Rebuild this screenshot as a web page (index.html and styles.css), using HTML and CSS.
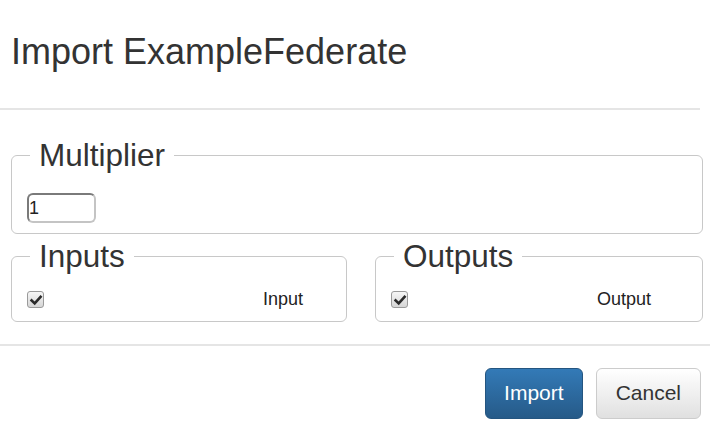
FILE: index.html
```html
<!DOCTYPE html>
<html>
<head>
<meta charset="utf-8">
<link rel="stylesheet" href="styles.css">
</head>
<body>
<div class="modal">
  <div class="modal-header">
    <h3 class="modal-title">Import ExampleFederate</h3>
  </div>
  <div class="modal-body">
    <fieldset class="group">
      <legend class="group-legend">Multiplier</legend>
      <input class="mult-input" type="text" value="1">
    </fieldset>
    <div class="io-row">
      <fieldset class="group">
        <legend class="group-legend">Inputs</legend>
        <div class="port-row">
          <span class="check"><svg viewBox="0 0 16 16" width="16" height="16"><path d="M3.6 8.4 L6.7 11.4 L12.6 4.8" fill="none" stroke="#2b2b2b" stroke-width="2.6" stroke-linecap="square"/></svg></span>
          <span class="port-name port-name-in">Input</span>
        </div>
      </fieldset>
      <fieldset class="group">
        <legend class="group-legend">Outputs</legend>
        <div class="port-row">
          <span class="check"><svg viewBox="0 0 16 16" width="16" height="16"><path d="M3.6 8.4 L6.7 11.4 L12.6 4.8" fill="none" stroke="#2b2b2b" stroke-width="2.6" stroke-linecap="square"/></svg></span>
          <span class="port-name port-name-out">Output</span>
        </div>
      </fieldset>
    </div>
  </div>
  <div class="modal-footer">
    <button class="btn btn-primary">Import</button>
    <button class="btn btn-default">Cancel</button>
  </div>
</div>
</body>
</html>
```
FILE: styles.css
```css
html, body {
  margin: 0;
  padding: 0;
  background: #fff;
}
body {
  font-family: "Liberation Sans", Arial, sans-serif;
  color: #333;
}
.modal {
  width: 710px;
}
.modal-header {
  padding: 32px 11px 36px;
  margin-right: 10px;
  border-bottom: 2px solid #e5e5e5;
}
.modal-title {
  margin: 0;
  font-size: 36px;
  font-weight: normal;
  line-height: 1.1;
  color: #333;
}
.modal-body {
  padding: 23px 7px 0 11px;
}
.group {
  margin: 0;
  border: 1px solid #c8c8c8;
  border-radius: 6px;
  padding: 0 15px 10px;
  min-width: 0;
}
.group-legend {
  font-size: 31.5px;
  line-height: 45px;
  padding: 0 9px;
  margin-left: 3px;
  color: #333;
}
.mult-input {
  display: block;
  margin-top: 15px;
  width: 69px;
  height: 30px;
  box-sizing: border-box;
  padding: 1px 0 0 0;
  border: 2px solid;
  border-color: #7a7a7a #c4c4c4 #c4c4c4 #7a7a7a;
  border-radius: 6px;
  font-family: "Liberation Sans", Arial, sans-serif;
  font-size: 18px;
  color: #222;
  background: #fff;
  outline: none;
}
.io-row {
  display: grid;
  grid-template-columns: 336px 328px;
  column-gap: 28px;
}
.io-row .group {
  padding-bottom: 11px;
}
.port-row {
  display: flex;
  align-items: center;
  height: 20px;
  margin-top: 11px;
}
.check {
  display: block;
  width: 15px;
  height: 15px;
  border: 1px solid #9a9a9a;
  border-radius: 3px;
  background: linear-gradient(#f6f6f6, #d6d6d6);
  overflow: hidden;
}
.check svg {
  display: block;
  margin: -0.5px;
}
.port-name {
  font-size: 18px;
  color: #222;
}
.port-name-in {
  margin-left: 219px;
}
.port-name-out {
  margin-left: 189px;
}
.modal-footer {
  margin-top: 22px;
  border-top: 2px solid #e5e5e5;
  padding: 22px 9px 0 0;
  display: flex;
  justify-content: flex-end;
  gap: 13px;
}
.btn {
  font-family: "Liberation Sans", Arial, sans-serif;
  font-size: 21px;
  line-height: 30px;
  padding: 9px 18px 10px;
  border: 1px solid;
  border-radius: 6px;
  cursor: pointer;
}
.btn-primary {
  color: #fff;
  background: linear-gradient(#337ab7, #265a88);
  border-color: #245580;
}
.btn-default {
  color: #333;
  background: linear-gradient(#fff, #e0e0e0);
  border-color: #ccc;
  padding: 9px 19px 10px;
}
```
